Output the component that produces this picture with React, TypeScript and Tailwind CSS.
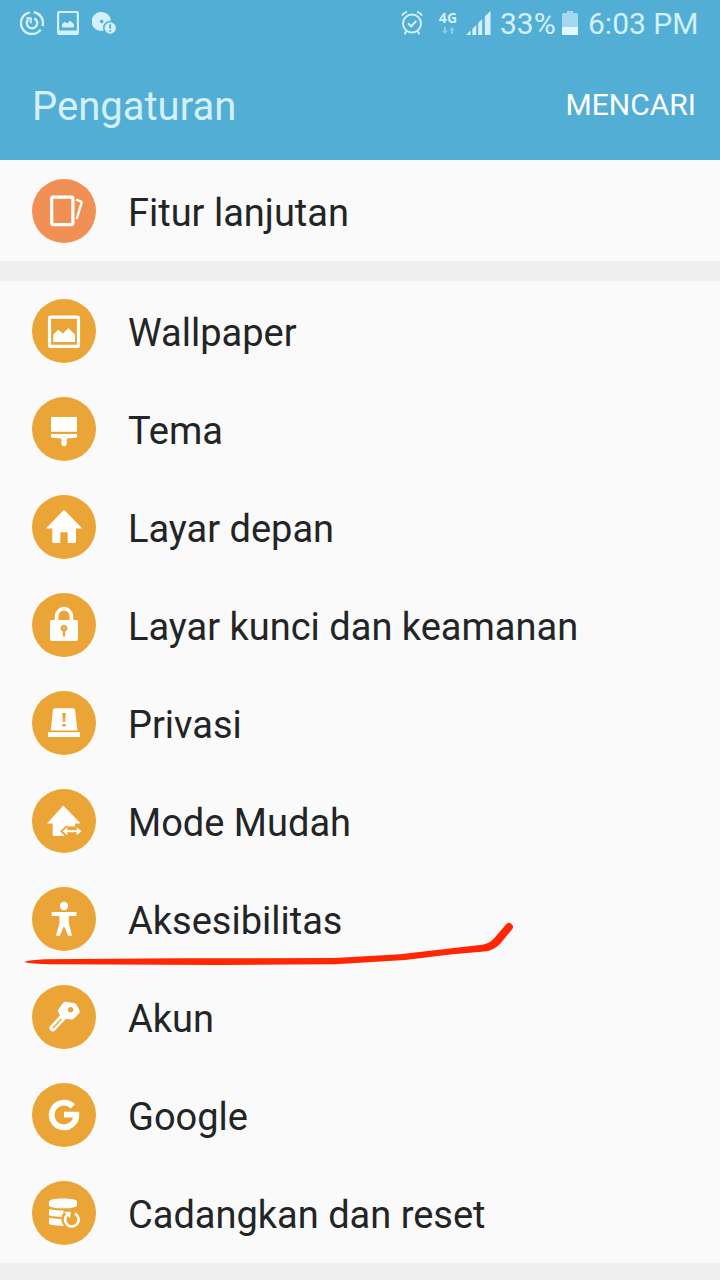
import type { ReactNode } from "react";

const ORANGE = "#eba537";

const icons: Record<string, ReactNode> = {
  advanced: (
    <g fill="none" stroke="#fff" strokeLinejoin="round">
      <rect x="19.7" y="18.2" width="21.2" height="27.4" rx="1.5" strokeWidth="3.2" />
      <path d="M44 20.600l4.800 1.800q1 .4.700 1.400L44.700 40" strokeWidth="2.400" />
    </g>
  ),
  wallpaper: (
    <>
      <rect x="17.500" y="18.200" width="29" height="29.200" rx="1.500" fill="none" stroke="#fff" strokeWidth="3.200" />
      <path d="M21.300 43V35.500l5-4.700 4.500 3.800 5.600-5.400 6.600 6.300V43z" fill="#fff" />
    </>
  ),
  theme: (
    <path
      fill="#fff"
      d="M19 20h26v14.700H19zM19 37h26v3.600l-8.500.6c-1.200.1-1.800.7-1.800 1.800v3.600a2.650 2.650 0 0 1-5.300 0V43c0-1.100-.6-1.700-1.800-1.800L19 40.600z"
    />
  ),
  home: (
    <path
      fill="#fff"
      d="M32 14.700L50.300 33.500H44V46.500q0 1.500-1.500 1.500H35.700V38.500q0-1.200-1.200-1.200h-5q-1.200 0-1.200 1.200V48H21.800q-1.500 0-1.500-1.500V33.500H13.900z"
    />
  ),
  lock: (
    <>
      <path d="M24.600 29v-5.700a7.400 7.600 0 0 1 14.800 0V29" fill="none" stroke="#fff" strokeWidth="3.700" />
      <rect x="18" y="27" width="28" height="21" rx="1.800" fill="#fff" />
      <circle cx="32" cy="35.200" r="3.300" fill={ORANGE} />
      <circle cx="32" cy="35.200" r="0.900" fill="#f6d49f" />
      <path d="M32 37v6.400" stroke={ORANGE} strokeWidth="2.200" />
    </>
  ),
  privacy: (
    <>
      <path fill="#fff" d="M22.600 17.300h18.800q1.500 0 1.700 1.500L45.400 39.400H18.800L20.900 18.800q.2-1.500 1.700-1.500zM16 41.300h32V46H16z" />
      <path fill={ORANGE} d="M30.200 22h3.600l-.8 9h-2zM30.200 33h3.600v2.400h-3.600z" />
    </>
  ),
  easy: (
    <>
      <path fill="#fff" d="M31.300 16.600L48.600 34.400H43V37.400H33.800L28.400 42.200 32.800 47H22.200q-1.500 0-1.500-1.500V34.400H15z" />
      <path fill="none" stroke="#fff" strokeWidth="2" d="M33 42.200h14" />
      <path fill="#fff" d="M30.500 42.200l4.800-4v8zM49.500 42.200l-4.800-4v8z" />
      <path fill="none" stroke={ORANGE} strokeWidth="1.200" d="M36 36.900L33.900 37.700 29.200 42.200l5 4.900" />
    </>
  ),
  accessibility: (
    <>
      <circle cx="32" cy="19" r="4.200" fill="#fff" />
      <path fill="#fff" d="M19.700 25h24.700v4H36.800v7.500l3.200 12.200h-3.900L32.500 40h-1l-3.700 8.700h-3.900L27.400 36.500V29h-7.700z" />
    </>
  ),
  key: (
    <>
      <path
        fill="#fff"
        stroke="#fff"
        strokeWidth="3.500"
        strokeLinejoin="round"
        d="M33 18.500l8.700 1.200q1 .2 1.500 1.100l2.600 5q.5 1-.3 1.800l-4.800 4.700q-.6.600-1.500.5l-9-1.400-2.500-5.800z"
      />
      <path d="M32 31L20.800 43" stroke="#fff" strokeWidth="6.600" strokeLinecap="round" />
      <path d="M29.500 33.900L21 43" stroke={ORANGE} strokeWidth="1.400" />
      <circle cx="38.700" cy="24.700" r="2.700" fill={ORANGE} />
    </>
  ),
  google: (
    <path
      fill="none"
      stroke="#fff"
      strokeWidth="5.800"
      d="M40.800 23.400A12.300 12.300 0 1 0 44.300 31.700H32"
    />
  ),
  backup: (
    <>
      <path fill="#fff" d="M17 20.500C17 18.500 23 17.400 31 17.400s14 1.100 14 3.100v3.700c0 2-6 3.100-14 3.100s-14-1.100-14-3.100z" />
      <path fill="#fff" d="M17 29.200q0-1.300 1.500-.9c4 1.100 8 1.200 13 1.200v2.500q-1.600 1.500-2 3.900-6 0-10.800-.8Q17 34.800 17 33.500zM17 37.800q0-1.300 1.500-.9 4.500 1 10.700 1 .1 3.800 2.800 6.800-7 .2-13.300-.9Q17 43.500 17 42.200z" />
      <path fill="none" stroke="#fff" strokeWidth="2.600" d="M42.800 32.500A6.800 6.800 0 1 1 35.200 33.700" />
      <path fill="#fff" d="M32 30.800h6.800l-.8 6.400z" />
    </>
  ),
};

const rows = [
  ["wallpaper", "Wallpaper"],
  ["theme", "Tema"],
  ["home", "Layar depan"],
  ["lock", "Layar kunci dan keamanan"],
  ["privacy", "Privasi"],
  ["easy", "Mode Mudah"],
  ["accessibility", "Aksesibilitas"],
  ["key", "Akun"],
  ["google", "Google"],
  ["backup", "Cadangkan dan reset"],
];

function Row({ icon, label, color = "bg-[#eba537]" }: { icon: string; label: string; color?: string }) {
  return (
    <div className="relative flex h-[98px] items-start pt-[18px] pl-8">
      <div className={`size-16 shrink-0 rounded-full ${color}`}>
        <svg viewBox="0 0 64 64" className="size-16">
          {icons[icon]}
        </svg>
      </div>
      <span className="ml-8 pt-0.5 text-[38px] leading-[64px] whitespace-nowrap">{label}</span>
      {icon === "accessibility" && (
        <svg className="absolute top-[50px] left-5 h-[56px] w-[500px]" viewBox="20 919 500 56">
          <path
            fill="#ff2600"
            d="M24 962Q30 960 45 959.300L180 958.300L335 958L400 954.300L482 944.800Q489 943.800 494 938.500L506 924.500A3.800 3.800 0 0 1 512 929.400L500 944Q493 951 484 951.600L450 954.500L405 960L335 964.300L220 965L50 964.300Q32 964 24 962z"
          />
        </svg>
      )}
    </div>
  );
}

function StatusBar() {
  return (
    <div className="flex h-12 items-start text-[#d3f0fb]">
      <svg className="ml-5 mt-[11px] size-6" viewBox="0 0 24 24" fill="none" stroke="currentColor" strokeWidth="2.400">
        <path d="M9.800 1.400A10.900 10.900 0 1 0 20.600 18.600M13.800 1.300A10.900 10.900 0 0 1 22.600 15" />
        <path d="M14.300 7.400A5.200 5.200 0 1 1 8.400 8.300" />
        <path d="M6.200 7.300h4.600v5" strokeWidth="2" />
      </svg>
      <svg className="ml-[13px] mt-[11px] h-6 w-[22px]" viewBox="0 0 22 24">
        <path
          fill="currentColor"
          fillRule="evenodd"
          d="M2 0h18q2 0 2 2v20q0 2-2 2H2q-2 0-2-2V2Q0 0 2 0zM2.200 2v17.600h17.600V2zM5 16.600V13l3-2.300 2 1.800 3.200-2.800 3.800 3.500v3.400z"
        />
      </svg>
      <svg className="ml-[13px] mt-3 h-[23px] w-6" viewBox="0 0 24 23">
        <path
          fill="currentColor"
          fillRule="evenodd"
          d="M9.700 0a9.500 9.500 0 0 1 9.400 8.800 7 7 0 0 0-7.400 9.800A9.500 9.500 0 1 1 9.700 0zM9.700 7.700a1.800 1.800 0 1 0 0 3.600 1.800 1.800 0 0 0 0-3.600z"
        />
        <circle cx="18.200" cy="16" r="5.700" fill="currentColor" />
        <path d="M18.200 12.200v4.600M18.200 18v1.800" stroke="#52aed5" strokeWidth="1.700" />
      </svg>
      <svg className="ml-[285px] mt-[11px] h-6 w-[22px]" viewBox="0 0 22 24" fill="none" stroke="currentColor" strokeWidth="2">
        <circle cx="11" cy="12.500" r="9" />
        <path d="M7 12.300l3.200 3 5-5.300M1 4.500Q2.700 1.800 6 .9M21 4.500Q19.300 1.800 16 .9M5.500 20l-2 3.300M16.500 20l2 3.300" />
      </svg>
      <div className="ml-[15px] mt-[11px] flex w-5 flex-col items-center">
        <span className="font-['Open_Sans',sans-serif] text-[14px] leading-[14px] font-bold tracking-[0.3px]">4G</span>
        <svg className="mt-[2px] h-[7px] w-[13px] opacity-45" viewBox="0 0 13 7">
          <path fill="currentColor" d="M2 0h2v3.500h2L3 7 0 3.500h2zM10 0l3 3.500h-2V7H9V3.500H7z" />
        </svg>
      </div>
      <svg className="ml-[8px] mt-[11px] h-6 w-[25px]" viewBox="0 0 25 24" fill="currentColor">
        <path d="M0 24l4.600-4.500V24zM6.300 18l4-4v10h-4zM12.200 12l4-4v16h-4zM18.800 5.500L24.500 0v24h-5.700z" />
      </svg>
      <span className="ml-[9px] mt-1 w-[57px] text-[30px] leading-10 whitespace-nowrap">33%</span>
      <svg className="ml-[5px] mt-[11px] h-6 w-4" viewBox="0 0 16 24">
        <path fill="#a1d8ed" d="M1 2h4V0h6v2h4q1 0 1 1v13H0V3q0-1 1-1z" />
        <path fill="#e2f7ff" d="M0 16h16v8H0z" />
      </svg>
      <span className="ml-[10px] mt-1 text-[30px] leading-10 whitespace-nowrap">6:03 PM</span>
    </div>
  );
}

export default function App() {
  return (
    <div className="flex h-[1280px] w-[720px] flex-col overflow-hidden bg-[#efefef] font-[Roboto,sans-serif] text-[#222426]">
      <header className="h-[160px] shrink-0 bg-[#52aed5]">
        <StatusBar />
        <div className="flex h-[112px] items-center justify-between pr-6 pl-8">
          <h1 className="pt-[5px] text-[40px] leading-[48px] font-normal text-[#d3f0fb]">Pengaturan</h1>
          <span className="pt-[2px] text-[30px] leading-10 text-white">MENCARI</span>
        </div>
      </header>
      <section className="h-[101px] shrink-0 bg-[#fafafa] pt-px">
        <Row icon="advanced" label="Fitur lanjutan" color="bg-[#f09054]" />
      </section>
      <section className="mt-5 h-[982px] shrink-0 bg-[#fafafa]">
        {rows.map(([icon, label]) => (
          <Row key={icon} icon={icon} label={label} />
        ))}
      </section>
    </div>
  );
}
